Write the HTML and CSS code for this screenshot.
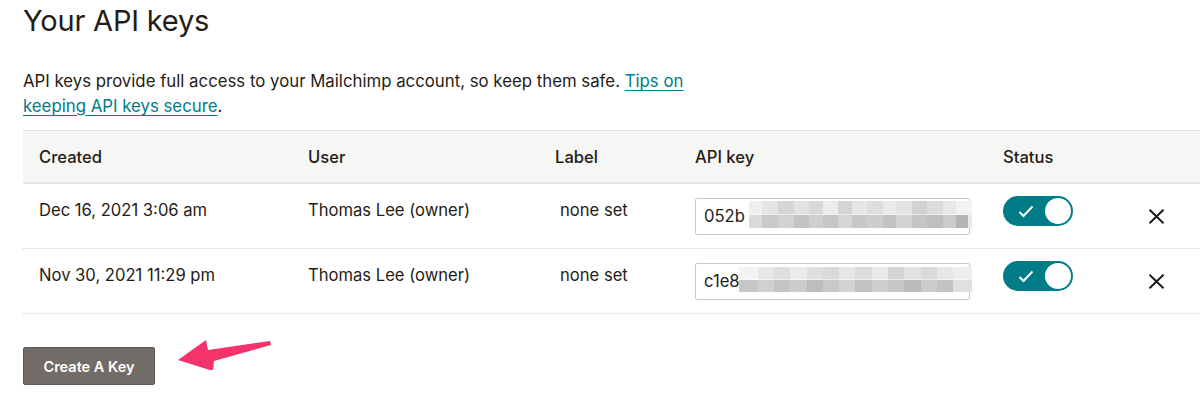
FILE: index.html
```html
<!DOCTYPE html>
<html lang="en">
<head>
    <meta charset="UTF-8">
    <title>Your API keys</title>
    <link rel="stylesheet" href="styles.css">
</head>
<body>
    <div class="page">
        <h1>Your API keys</h1>
        <p class="intro">API keys provide full access to your Mailchimp account, so keep them safe. <a href="#">Tips on<br>keeping API keys secure</a>.</p>

        <div class="keys">
            <div class="row head">
                <div class="cell">Created</div>
                <div class="cell">User</div>
                <div class="cell">Label</div>
                <div class="cell">API key</div>
                <div class="cell">Status</div>
                <div class="cell"></div>
            </div>
            <div class="row">
                <div class="cell">Dec 16, 2021 3:06 am</div>
                <div class="cell">Thomas Lee (owner)</div>
                <div class="cell label">none set</div>
                <div class="cell">
                    <div class="key-field"><span>052b</span><div class="mask mask-a"></div></div>
                </div>
                <div class="cell">
                    <div class="toggle">
                        <svg class="check" width="16" height="13" viewBox="0 0 16 13"><path d="M1.5 7 L5.5 11 L14.5 1.5" fill="none" stroke="#fff" stroke-width="2"/></svg>
                        <span class="knob"></span>
                    </div>
                </div>
                <div class="cell">
                    <svg class="remove" width="17" height="15" viewBox="0 0 17 15"><path d="M1.5 0.8 L15.5 14.2 M15.5 0.8 L1.5 14.2" stroke="#1a1a1a" stroke-width="2"/></svg>
                </div>
            </div>
            <div class="row">
                <div class="cell">Nov 30, 2021 11:29 pm</div>
                <div class="cell">Thomas Lee (owner)</div>
                <div class="cell label">none set</div>
                <div class="cell">
                    <div class="key-field"><span>c1e8</span><div class="mask mask-b"></div></div>
                </div>
                <div class="cell">
                    <div class="toggle">
                        <svg class="check" width="16" height="13" viewBox="0 0 16 13"><path d="M1.5 7 L5.5 11 L14.5 1.5" fill="none" stroke="#fff" stroke-width="2"/></svg>
                        <span class="knob"></span>
                    </div>
                </div>
                <div class="cell">
                    <svg class="remove" width="17" height="15" viewBox="0 0 17 15"><path d="M1.5 0.8 L15.5 14.2 M15.5 0.8 L1.5 14.2" stroke="#1a1a1a" stroke-width="2"/></svg>
                </div>
            </div>
        </div>

        <div class="actions">
            <button type="button" class="create">Create A Key</button>
            <svg class="arrow" width="100" height="40" viewBox="0 0 100 40">
                <polygon points="7,30 35,10 37,20 99,11 100,15 43,31 42,41" fill="#f4336c"/>
            </svg>
        </div>
    </div>
</body>
</html>
```

FILE: styles.css
```css
/* Mailchimp API keys */
body {
    margin: 0;
    font-family: Inter, "Helvetica Neue", sans-serif;
    color: #241c15;
    background: #fff;
    overflow: hidden;
}

.page {
    padding-left: 23px;
}

h1 {
    margin: 0;
    padding-top: 1px;
    font-size: 29px;
    font-weight: 400;
    line-height: 40px;
    letter-spacing: -0.2px;
}

.intro {
    margin: 28px 0 0;
    font-size: 16.8px;
    line-height: 25px;
}

.intro a {
    color: #007c89;
    text-decoration: underline;
    text-underline-offset: 3px;
}

.keys {
    margin-top: 11px;
    border-top: 1px solid #e2e2e0;
}

.row {
    display: grid;
    grid-template-columns: 269px 247px 140px 308px 145px 1fr;
    padding-left: 16px;
    height: 64px;
    border-bottom: 1px dotted #d6d6d6;
    font-size: 16.6px;
    line-height: 24px;
}

.row .cell {
    padding-top: 14px;
}

.row.head {
    height: 51px;
    background: #f6f6f4;
    border-bottom: 2px solid #e6e6e4;
    font-weight: 500;
    align-items: center;
}

.row.head .cell {
    padding-top: 0;
}

.cell.label {
    padding-left: 5px;
}

.key-field {
    position: relative;
    width: 273px;
    height: 35px;
    border: 1px solid #c9c9c9;
    border-radius: 2px;
    box-sizing: content-box;
    font-size: 16.6px;
    line-height: 35px;
}

.key-field span {
    padding-left: 8px;
}

.mask {
    position: absolute;
    top: 2px;
    left: 53px;
    right: -3px;
    height: 27px;
    background-size: 100% 50%;
    background-repeat: no-repeat;
}

.mask-a {
    background-image:
        linear-gradient(90deg, #efefef 0 6%, #e4e4e4 6% 13%, #d6d6d6 13% 20%, #e2e2e2 20% 27%, #d9d9d9 27% 33%, #ececec 33% 40%, #d4d4d4 40% 46%, #e6e6e6 46% 53%, #dedede 53% 60%, #eaeaea 60% 66%, #e3e3e3 66% 73%, #d2d2d2 73% 80%, #dcdcdc 80% 87%, #e8e8e8 87% 93%, #f2f2f2 93% 100%),
        linear-gradient(90deg, #dadada 0 6%, #c9c9c9 6% 13%, #d2d2d2 13% 20%, #c3c3c3 20% 27%, #cfcfcf 27% 33%, #c6c6c6 33% 40%, #d5d5d5 40% 46%, #c8c8c8 46% 53%, #cdcdcd 53% 60%, #c2c2c2 60% 66%, #d3d3d3 66% 73%, #c5c5c5 73% 80%, #bfbfbf 80% 87%, #cbcbcb 87% 93%, #b5b5b5 93% 98%, #e8e8e8 98% 100%);
    background-position: 0 0, 0 100%;
}

.mask-b {
    left: 43px;
    top: 3px;
    height: 25px;
    background-image:
        linear-gradient(90deg, #f3f3f3 0 8%, #e8e8e8 8% 15%, #dedede 15% 22%, #ebebeb 22% 29%, #e0e0e0 29% 36%, #d9d9d9 36% 43%, #e6e6e6 43% 50%, #dcdcdc 50% 57%, #e9e9e9 57% 64%, #d4d4d4 64% 71%, #e2e2e2 71% 78%, #dadada 78% 85%, #e7e7e7 85% 92%, #eeeeee 92% 100%),
        linear-gradient(90deg, #c7c7c7 0 8%, #d0d0d0 8% 15%, #c4c4c4 15% 22%, #cccccc 22% 29%, #bdbdbd 29% 36%, #c9c9c9 36% 43%, #d3d3d3 43% 50%, #c2c2c2 50% 57%, #cfcfcf 57% 64%, #c6c6c6 64% 71%, #bcbcbc 71% 78%, #cbcbcb 78% 85%, #c3c3c3 85% 92%, #e0e0e0 92% 100%);
    background-position: 0 0, 0 100%;
}

.toggle {
    display: flex;
    align-items: center;
    justify-content: space-between;
    width: 70px;
    height: 30px;
    margin-top: -2px;
    border-radius: 15px;
    background: #007c89;
    box-sizing: border-box;
    padding: 0 2px 0 15px;
}

.knob {
    width: 26px;
    height: 26px;
    border-radius: 50%;
    background: #fff;
}

.remove {
    display: block;
    margin-top: 11px;
}

.actions {
    display: flex;
    align-items: flex-start;
    margin-top: 33px;
}

.create {
    width: 132px;
    height: 38px;
    border: 1px solid #5f5a56;
    border-radius: 2px;
    background: #726c68;
    color: #fff;
    font-family: Inter, "Helvetica Neue", sans-serif;
    font-size: 14.5px;
    font-weight: 600;
    cursor: pointer;
}

.arrow {
    margin-left: 16px;
    margin-top: -17px;
}
```
